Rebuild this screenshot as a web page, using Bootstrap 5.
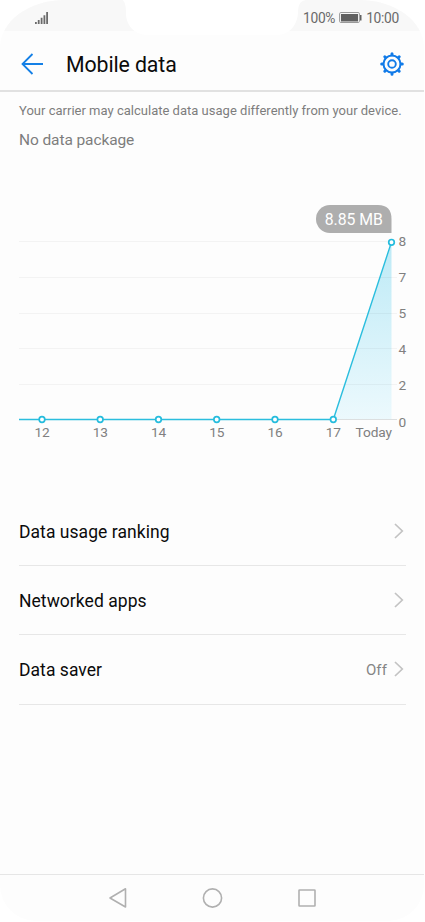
<!DOCTYPE html>
<html lang="en">
<head>
<meta charset="utf-8">
<meta name="viewport" content="width=device-width, initial-scale=1">
<title>Mobile data</title>
<link href="https://cdn.jsdelivr.net/npm/bootstrap@5.3.0/dist/css/bootstrap.min.css" rel="stylesheet">
<style>
body{font-family:Roboto,"Liberation Sans",sans-serif;background:#fff;color:#0b0b0b;overflow:hidden}
svg{display:block}
.phone{width:424px;height:921px;background:#fdfdfd;border-radius:64px 64px 36px 36px/48px 48px 36px 36px}
.status-bar{height:31px;background:#f8f8f8;color:#6a6a6a;font-size:13.8px;letter-spacing:-.3px;line-height:20px;padding:8px 25px 0 35px}
.signal{margin-top:3px}
.battery{margin:-5px 4px 0 4px}
.notch{top:0;left:119px}
.app-bar{height:61px;border-bottom:2px solid #e1e1e1;padding:6px 20px 0 21px}
.app-title{font-size:21.3px;line-height:28px;font-weight:400;margin:3px 0 0 22px;letter-spacing:-.1px}
.intro{padding:10px 19px 0;color:#7d7d7d;height:62px}
.note{font-size:13px;line-height:18px;letter-spacing:.01px;white-space:nowrap}
.plan{font-size:15.5px;line-height:20px;margin-top:10px;letter-spacing:-.1px}
.chart{height:343px}
.chart text{font-size:13.7px;fill:#808080;letter-spacing:-.1px}
.chart .tip{font-size:15.8px;fill:#fff;letter-spacing:-.05px}
.option{height:69.2px;margin:0 18px 0 19px;border-bottom:1px solid #e7e7e7;font-size:17.5px;letter-spacing:.05px;padding:0 2px 0 0}
.option-name{padding-top:2px}
.state{font-size:15px;color:#858585;margin:1px 7px 0 0;letter-spacing:.1px}
.nav-keys{height:47px;border-top:1px solid #e6e6e6}
</style>
</head>
<body>
<div class="phone d-flex flex-column position-relative overflow-hidden">
  <div class="status-bar d-flex justify-content-between flex-shrink-0">
    <svg class="signal" width="14" height="13" viewBox="0 0 14 13" fill="#6b6b6b"><path d="M0 11h1.8v2H0zM2.8 9h1.8v4H2.8zM5.7 6.7h1.8V13H5.7zM8.5 4.2h1.8V13H8.5zM11.2 1H13v12h-1.8z"/></svg>
    <div class="d-flex"><span>100%</span>
      <svg class="battery" width="23" height="20" viewBox="0 0 23 20"><rect x=".6" y="9.5" width="19.8" height="10" rx="1.2" fill="#f8f8f8" stroke="#999"/><rect x="2" y="11" width="17" height="7.5" fill="#606060"/><rect x="21" y="12" width="1.5" height="5.5" fill="#606060"/></svg>
      <span>10:00</span>
    </div>
  </div>
  <svg class="notch position-absolute" width="186" height="36" viewBox="0 0 186 36"><path d="M0-2C6 0 7 5 7 13C7 25 15 35 29 35H157C171 35 178 25 179 13C179 5 181 1 187 0V-2Z" fill="#fff"/></svg>
  <header class="app-bar d-flex align-items-center flex-shrink-0">
    <svg width="23" height="24" viewBox="0 0 23 24" fill="none" stroke="#1580e6" stroke-width="1.8"><path d="M22 12H2M11.5 2 1.5 12 11.5 22"/></svg>
    <h1 class="app-title">Mobile data</h1>
    <svg class="ms-auto" width="24" height="24" viewBox="-12 -12 24 24" fill="none" stroke="#127be8"><circle r="8.5" stroke-width="2"/><circle r="3.8" stroke-width="1.9"/><g stroke-width="3" stroke-linecap="round"><path d="M0-9.2V-10.3M0 9.2V10.3M-9.2 0H-10.3M9.2 0H10.3M-6.6-6.6-7.2-7.2M6.6-6.6 7.2-7.2M-6.6 6.6-7.2 7.2M6.6 6.6 7.2 7.2"/></g></svg>
  </header>
  <div class="intro flex-shrink-0">
    <div class="note">Your carrier may calculate data usage differently from your device.</div>
    <div class="plan">No data package</div>
  </div>
  <svg class="chart flex-shrink-0" width="424" height="343" viewBox="0 154 424 343">
    <defs><linearGradient id="area" x1="0" y1="0" x2="0" y2="1"><stop offset="0" stop-color="#bdeaf6"/><stop offset="1" stop-color="#ecf9fd"/></linearGradient></defs>
    <path d="M333.3 419.5 391.5 242V419.5Z" fill="url(#area)"/>
    <path d="M19 241.5H391M19 277.5H397M19 313.5H397M19 348.5H397M19 384.5H397" stroke="#000" stroke-opacity=".04" fill="none"/>
    <path d="M333 419.5H397" stroke="#dcdfe0"/>
    <path d="M19 419.5H333.3L391.5 242" fill="none" stroke="#2bbede" stroke-width="1.4"/>
    <g fill="#fff" stroke="#25bcdd" stroke-width="1.7"><circle cx="42" cy="419.5" r="2.8"/><circle cx="100.2" cy="419.5" r="2.8"/><circle cx="158.5" cy="419.5" r="2.8"/><circle cx="216.7" cy="419.5" r="2.8"/><circle cx="275" cy="419.5" r="2.8"/><circle cx="333.3" cy="419.5" r="2.8"/><circle cx="391.5" cy="242.3" r="2.8"/></g>
    <path d="M330 205H378Q391.5 205 391.5 219V233H330A14 14 0 0 1 330 205Z" fill="#aeaeae"/>
    <text class="tip" x="353.7" y="225" text-anchor="middle">8.85 MB</text>
    <g text-anchor="middle"><text x="42" y="436.6">12</text><text x="100.3" y="436.6">13</text><text x="158.6" y="436.6">14</text><text x="216.8" y="436.6">15</text><text x="275" y="436.6">16</text><text x="333.3" y="436.6">17</text><text x="373.8" y="436.6">Today</text>
    <text x="402.3" y="245.6">8</text><text x="402.3" y="281.6">7</text><text x="402.3" y="318">5</text><text x="402.3" y="354.3">4</text><text x="402.3" y="390.3">2</text><text x="402.3" y="426.6">0</text></g>
  </svg>
  <main>
    <div class="option d-flex align-items-center"><span class="option-name">Data usage ranking</span><svg class="ms-auto" width="10" height="16" viewBox="0 0 10 16" fill="none" stroke="#c3c3c3" stroke-width="1.7"><path d="M1 1 8.3 8 1 15"/></svg></div>
    <div class="option d-flex align-items-center"><span class="option-name">Networked apps</span><svg class="ms-auto" width="10" height="16" viewBox="0 0 10 16" fill="none" stroke="#c3c3c3" stroke-width="1.7"><path d="M1 1 8.3 8 1 15"/></svg></div>
    <div class="option d-flex align-items-center"><span class="option-name">Data saver</span><span class="state ms-auto">Off</span><svg width="10" height="16" viewBox="0 0 10 16" fill="none" stroke="#c3c3c3" stroke-width="1.7"><path d="M1 1 8.3 8 1 15"/></svg></div>
  </main>
  <footer class="nav-keys mt-auto flex-shrink-0">
    <svg width="424" height="46" viewBox="0 875 424 46" fill="none" stroke="#b0b0b0" stroke-width="1.6" stroke-linejoin="round"><path d="M110 898 125.5 888.8V907Z"/><circle cx="212.5" cy="898" r="9.1"/><rect x="299" y="890" width="16" height="16" rx=".5"/></svg>
  </footer>
</div>
<script src="https://cdn.jsdelivr.net/npm/bootstrap@5.3.0/dist/js/bootstrap.bundle.min.js"></script>
</body>
</html>
